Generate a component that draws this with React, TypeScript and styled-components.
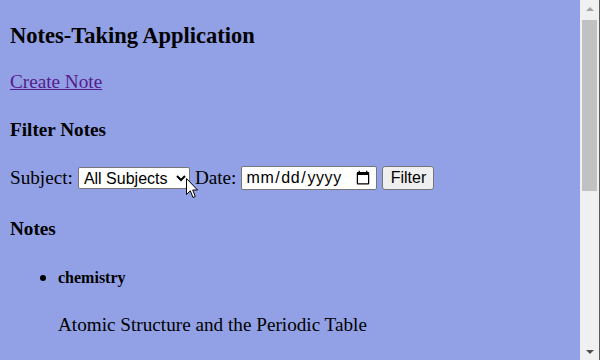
import * as React from 'react';
import styled, { createGlobalStyle } from 'styled-components';

const GlobalStyle = createGlobalStyle`
  html, body {
    margin: 0;
    height: 100%;
    overflow: hidden;
    background: #92a0e6;
  }
  body {
    font-family: "Liberation Serif", "Times New Roman", serif;
    font-size: 19.2px;
    color: #000;
  }
`;

const Page = styled.div`
  position: relative;
  display: flex;
  height: 360px;
  width: 100%;
`;

const Main = styled.main`
  flex: 1;
  min-width: 0;
  overflow: hidden;
  padding: 0 10px;
`;

const ScrollBar = styled.div`
  width: 19px;
  display: flex;
  flex-direction: column;
  align-items: center;
  background: #f0f0f0;
  border-right: 1px solid #5a5a5a;
`;

const ScrollArrow = styled.div<{ $down?: boolean }>`
  height: 17px;
  width: 100%;
  display: flex;
  align-items: center;
  justify-content: center;
  margin-top: ${p => (p.$down ? 'auto' : '0')};

  &::before {
    content: '';
    border-left: 4px solid transparent;
    border-right: 4px solid transparent;
    ${p =>
      p.$down
        ? 'border-top: 4px solid #505050;'
        : 'border-bottom: 4px solid #a3a3a3;'}
  }
`;

const ScrollThumb = styled.div`
  width: 15px;
  height: 171px;
  margin-top: 3px;
  background: #c1c1c1;
`;

const Pointer = styled.svg`
  position: absolute;
  left: 186px;
  top: 178px;
  pointer-events: none;
`;

const Title = styled.h3`
  margin: 22.5px 0;
  font-size: 22.5px;
  font-weight: bold;
`;

const CreateLink = styled.a`
  display: block;
  margin: 19.2px 0;
  color: #551a8b;
  text-decoration: underline;
  cursor: pointer;
`;

const SectionTitle = styled.h4`
  margin: 25.5px 0;
  font-size: 19.2px;
  font-weight: bold;
`;

const FilterForm = styled.form`
  display: flex;
  align-items: center;
  gap: 5px;
  margin: 0;
  padding-bottom: 2px;
`;

const Label = styled.label`
  font-size: 19.2px;
`;

const Select = styled.select`
  font-family: "Liberation Sans", Arial, sans-serif;
  font-size: 16px;
  width: 112px;
  height: 22px;
  padding: 0 1px;
  border: 1px solid #767676;
  border-radius: 2px;
  background: #fff;
  color: #000;
`;

const DateInput = styled.input`
  font-family: "Liberation Sans", Arial, sans-serif;
  font-size: 16px;
  width: 136px;
  height: 24px;
  box-sizing: border-box;
  padding: 1px 3px;
  border: 1px solid #767676;
  border-radius: 2px;
  background: #fff;
  color: #000;

  &::-webkit-datetime-edit {
    letter-spacing: 0.6px;
  }
`;

const Button = styled.button`
  font-family: "Liberation Sans", Arial, sans-serif;
  font-size: 16px;
  width: 52px;
  height: 24px;
  padding: 1px 6px;
  border: 1px solid #767676;
  border-radius: 3px;
  background: #efefef;
  color: #000;
`;

const NoteList = styled.ul`
  margin: 19.2px 0;
  padding-left: 48px;
`;

const NoteItem = styled.li`
  margin-bottom: 10px;
`;

const NoteSubject = styled.h5`
  margin: 26.5px 0;
  font-size: 16px;
  font-weight: bold;
`;

const NoteText = styled.p`
  margin: 19.2px 0;
`;

const notes = [
  { subject: 'chemistry', title: 'Atomic Structure and the Periodic Table' },
];

export default function App() {
  return (
    <>
      <GlobalStyle />
      <Page>
        <Main>
          <Title>Notes-Taking Application</Title>
          <CreateLink href="#">Create Note</CreateLink>
          <SectionTitle>Filter Notes</SectionTitle>
          <FilterForm onSubmit={e => e.preventDefault()}>
            <Label htmlFor="subject">Subject:</Label>
            <Select id="subject" defaultValue="">
              <option value="">All Subjects</option>
              <option value="chemistry">chemistry</option>
            </Select>
            <Label htmlFor="date">Date:</Label>
            <DateInput id="date" type="date" />
            <Button type="submit">Filter</Button>
          </FilterForm>
          <SectionTitle>Notes</SectionTitle>
          <NoteList>
            {notes.map(note => (
              <NoteItem key={note.title}>
                <NoteSubject>{note.subject}</NoteSubject>
                <NoteText>{note.title}</NoteText>
              </NoteItem>
            ))}
          </NoteList>
        </Main>
        <ScrollBar>
          <ScrollArrow />
          <ScrollThumb />
          <ScrollArrow $down />
        </ScrollBar>
        <Pointer width="13" height="21" viewBox="0 0 13 21">
          <path
            d="M0.5 0.5 L0.5 16.5 L4.3 12.8 L7 19.5 L9.3 18.5 L6.7 12 L11.5 12 Z"
            fill="#fff"
            stroke="#000"
            strokeWidth="1"
            strokeLinejoin="round"
          />
        </Pointer>
      </Page>
    </>
  );
}
